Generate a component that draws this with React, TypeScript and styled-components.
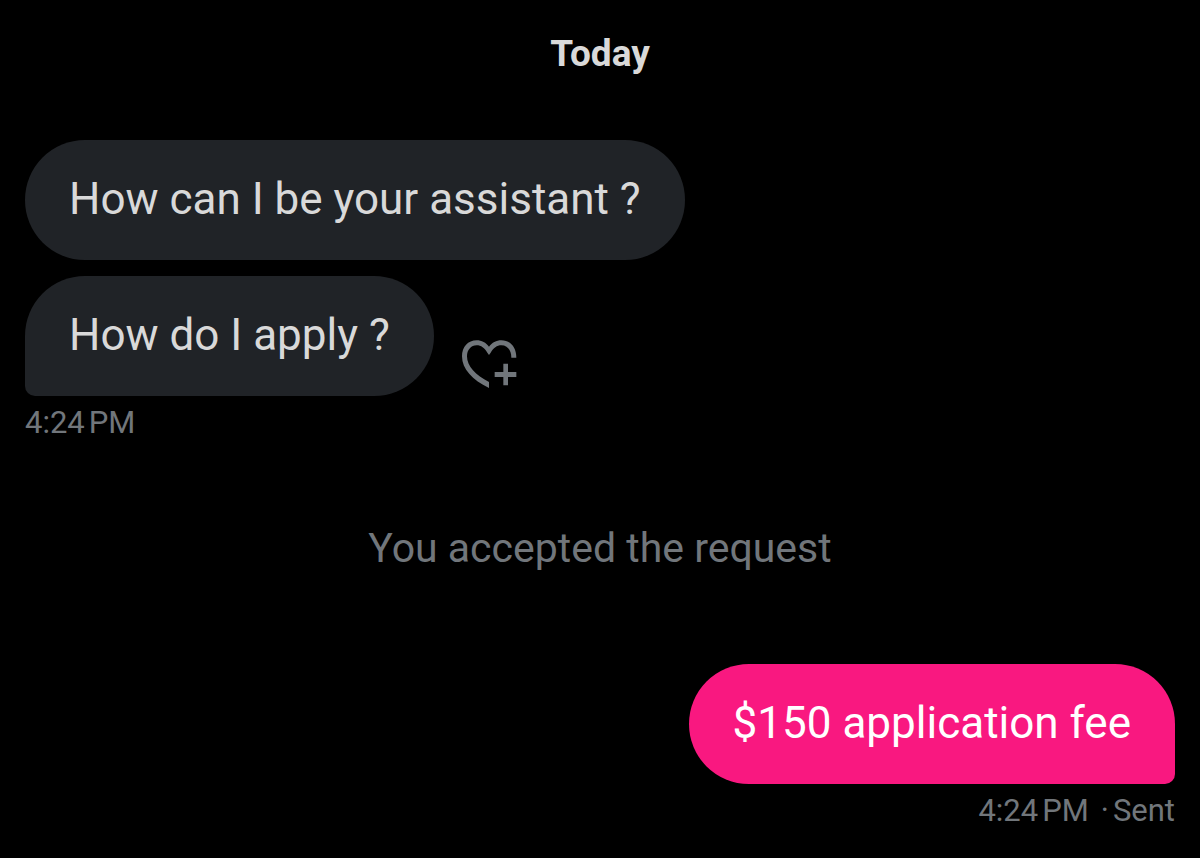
import React from 'react';
import styled, { createGlobalStyle } from 'styled-components';

const Global = createGlobalStyle`
  * { box-sizing: border-box; }
  body { margin: 0; background: #000; font-family: Roboto, "Liberation Sans", sans-serif; }
`;
const Page = styled.main`
  display: flex;
  flex-direction: column;
  min-height: 100vh;
  padding: 30px 25px 24px;
  background: #000;
`;
const DateHeading = styled.h1`
  margin: 0 0 62px;
  text-align: center;
  font-size: 37px;
  line-height: 48px;
  font-weight: 700;
  color: #d9d9d9;
`;
const Thread = styled.section<{ $own?: boolean }>`
  display: flex;
  flex-direction: column;
  align-items: ${p => (p.$own ? 'flex-end' : 'flex-start')};
  gap: 16px;
`;
const Row = styled.div`
  display: flex;
  align-items: flex-end;
  gap: 28px;
`;
const Bubble = styled.p<{ $own?: boolean; $tail?: boolean }>`
  margin: 0;
  padding: 31px 44px 33px;
  font-size: 44px;
  line-height: 56px;
  color: ${p => (p.$own ? '#fff' : '#d9d9d9')};
  background: ${p => (p.$own ? '#f91880' : '#202327')};
  border-radius: ${p => (p.$tail ? (p.$own ? '60px 60px 10px 60px' : '60px 60px 60px 10px') : '60px')};
`;
const ReactionButton = styled.button`
  display: flex;
  padding: 0 0 8px;
  border: 0;
  background: none;
  color: #71767b;
  cursor: pointer;
`;
const Meta = styled.div<{ $own?: boolean }>`
  display: flex;
  justify-content: ${p => (p.$own ? 'flex-end' : 'flex-start')};
  gap: 12px;
  margin-top: 7px;
  font-size: 31px;
  line-height: 40px;
  color: #71767b;
`;
const Stamp = styled.span`
  display: flex;
  gap: 4px;
`;
const Notice = styled.p`
  margin: 77px 0 88px;
  text-align: center;
  font-size: 41px;
  line-height: 56px;
  color: #71767b;
`;

export default function App() {
  return (
    <>
      <Global />
      <Page>
        <DateHeading>Today</DateHeading>
        <Thread>
          <Bubble>How can I be your assistant ?</Bubble>
          <Row>
            <Bubble $tail>How do I apply ?</Bubble>
            <ReactionButton aria-label="Add reaction">
              <svg width="55" height="48" viewBox="33 45 165 144" fill="currentColor" aria-hidden="true">
                <path d="M196 98h-15C181 74 168 61 151 61C138 61 127 69 119 83L114 90L109 83C101 69 90 61 77 61C60 61 48 75 48 94C48 124 74 151 114 171V189C64 165 33 132 33 94C33 66 51 46 77 46C92 46 105 53 114 65C123 53 136 46 151 46C177 46 196 66 196 98z" />
                <path d="M157 116h14v25h25v15h-25v25h-14v-25h-26v-15h26z" />
              </svg>
            </ReactionButton>
          </Row>
        </Thread>
        <Meta>
          <Stamp><span>4:24</span> <span>PM</span></Stamp>
        </Meta>
        <Notice>You accepted the request</Notice>
        <Thread $own>
          <Bubble $own $tail>$150 application fee</Bubble>
        </Thread>
        <Meta $own>
          <Stamp><span>4:24</span> <span>PM</span></Stamp>
          <Stamp><span>·</span> <span>Sent</span></Stamp>
        </Meta>
      </Page>
    </>
  );
}
